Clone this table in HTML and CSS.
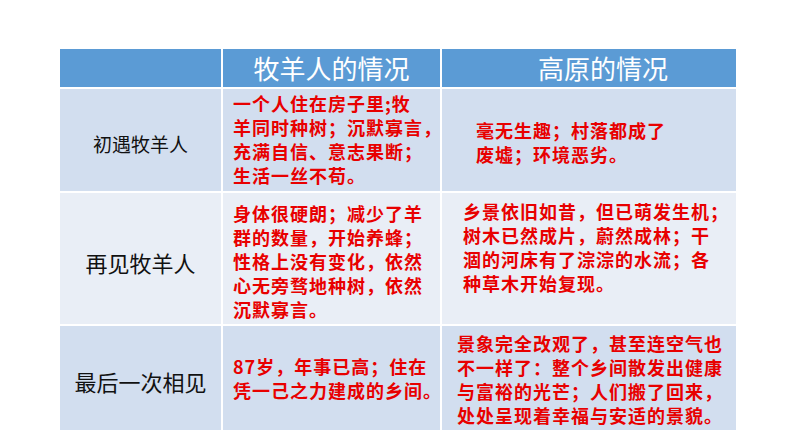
FILE: index.html
```html
<!DOCTYPE html>
<html lang="zh">
<head>
<meta charset="utf-8">
<link rel="stylesheet" href="styles.css">
</head>
<body>
<div class="page">
  <div class="table">
    <div class="cell head"></div>
    <div class="cell head">牧羊人的情况</div>
    <div class="cell head head-shift">高原的情况</div>

    <div class="cell band1 label small">初遇牧羊人</div>
    <div class="cell band1 red top pad-c2 pt2">一个人住在房子里;牧<br>羊同时种树；沉默寡言，<br>充满自信、意志果断；<br>生活一丝不苟。</div>
    <div class="cell band1 red mid pad-r1">毫无生趣；村落都成了<br>废墟；环境恶劣。</div>

    <div class="cell band2 label">再见牧羊人</div>
    <div class="cell band2 red top pad-c2 pt8">身体很硬朗；减少了羊<br>群的数量，开始养蜂；<br>性格上没有变化，依然<br>心无旁骛地种树，依然<br>沉默寡言。</div>
    <div class="cell band2 red top pad-r2 pt6">乡景依旧如昔，但已萌发生机；<br>树木已然成片，蔚然成林；干<br>涸的河床有了淙淙的水流；各<br>种草木开始复现。</div>

    <div class="cell band1 label">最后一次相见</div>
    <div class="cell band1 red mid pad-c2">87岁，年事已高；住在<br>凭一己之力建成的乡间。</div>
    <div class="cell band1 red top pad-r3 pt5">景象完全改观了，甚至连空气也<br>不一样了：整个乡间散发出健康<br>与富裕的光芒；人们搬了回来，<br>处处呈现着幸福与安适的景貌。</div>
  </div>
</div>
</body>
</html>
```

FILE: styles.css
```css
html, body {
  margin: 0;
  padding: 0;
  background: #ffffff;
}

.page {
  width: 794px;
  height: 447px;
  padding: 49px 0 0 60px;
  box-sizing: border-box;
}

.table {
  display: grid;
  grid-template-columns: 161px 217px 294px;
  grid-template-rows: 38px 102px 131px 104px;
  gap: 2px;
  background: #ffffff;
  width: 676px;
}

.cell {
  display: flex;
  box-sizing: border-box;
  font-family: "Noto Sans CJK SC", "Noto Sans", sans-serif;
  white-space: nowrap;
}

.head {
  background: #5b9bd5;
  color: #ffffff;
  font-size: 26px;
  align-items: center;
  justify-content: center;
  line-height: 1;
}

.head-shift {
  padding-left: 28px;
}

.band1 {
  background: #d2deef;
}

.band2 {
  background: #e9eef6;
}

.label {
  align-items: center;
  justify-content: center;
  color: #111111;
  font-size: 22px;
  line-height: 1;
  padding-top: 6px;
}

.label.small {
  font-size: 19px;
}

.red {
  color: #e80000;
  font-size: 18px;
  font-weight: 700;
  letter-spacing: 1px;
  line-height: 24px;
}

.top {
  align-items: flex-start;
}

.mid {
  align-items: center;
}

.pad-c2 { padding-left: 10px; }
.pad-r1 { padding-left: 34px; padding-top: 4px; }
.pad-r2 { padding-left: 21px; }
.pad-r3 { padding-left: 15px; }

.pt2 { padding-top: 2px; }
.pt5 { padding-top: 5px; }
.pt6 { padding-top: 6px; }
.pt8 { padding-top: 8px; }
```
